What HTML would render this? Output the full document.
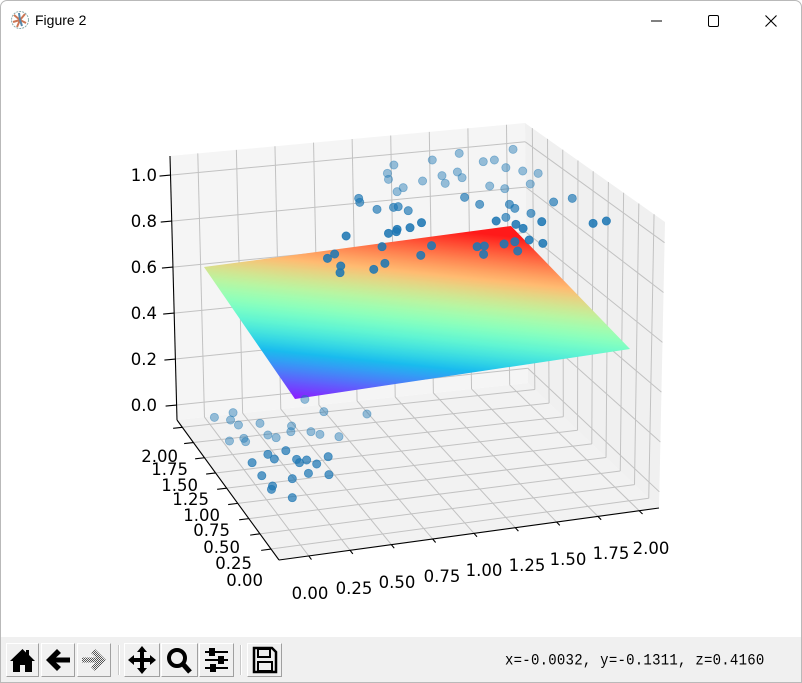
<!DOCTYPE html>
<html><head><meta charset="utf-8">
<style>
html,body{margin:0;padding:0;}
body{width:802px;height:683px;overflow:hidden;background:#fff;font-family:"Liberation Sans",sans-serif;position:relative;}
#win{position:absolute;left:0;top:0;width:800px;height:681px;border:1px solid #b9b9b9;border-radius:7px 7px 0 0;overflow:hidden;background:#fff;}
#title{position:absolute;left:34px;top:11px;font-size:14px;color:#000;font-family:"Liberation Sans","DejaVu Sans",sans-serif;}
#tb{position:absolute;left:0;top:636px;width:800px;height:45px;background:#f0f0f0;}
.btn{position:absolute;top:6px;height:34px;background:#f0f0f0;border:1px solid;border-color:#fff #a0a0a0 #a0a0a0 #fff;box-sizing:border-box;}
.sep{position:absolute;top:8px;width:1px;height:30px;background:#c8c8c8;border-right:1px solid #fff;}
#status{position:absolute;left:504px;top:16px;font-family:"Liberation Mono",monospace;font-size:14px;letter-spacing:0.25px;color:#000;transform:scaleY(1.1);}
svg text{font-family:"DejaVu Sans",sans-serif;}
</style></head><body>
<div id="win">
<svg style="position:absolute;left:9px;top:9px" width="20" height="20" viewBox="0 0 20 20">
<circle cx="10" cy="10" r="8.5" fill="#fff" stroke="#8aa" stroke-width="1" stroke-dasharray="2 1"/>
<path d="M10 10 L4 5 M10 10 L15 4 M10 10 L16 13 M10 10 L7 17 M10 10 L3 12" stroke="#c75" stroke-width="2"/>
<path d="M10 10 L12 16 M10 10 L9 3" stroke="#58a" stroke-width="2"/>
</svg>
<div id="title">Figure 2</div>
<svg style="position:absolute;left:640px;top:8px" width="150" height="24">
<line x1="10" y1="12" x2="21" y2="12" stroke="#000" stroke-width="1"/>
<rect x="67.5" y="6.5" width="10" height="11" rx="1.5" fill="none" stroke="#000" stroke-width="1"/>
<path d="M124.5 6.5 L135.5 17.5 M135.5 6.5 L124.5 17.5" stroke="#000" stroke-width="1.1"/>
</svg>
<svg id="plot" style="position:absolute;left:-1px;top:-1px" width="802" height="683"></svg>
<div id="tb">
 <div class="btn" style="left:5px;width:33px"><svg width="31" height="32" viewBox="0 0 31 32"><path d="M15.5 5 L3 17 L6 17 L6 28 L13 28 L13 21 L18 21 L18 28 L25 28 L25 17 L28 17 L22 11 L22 6 L19 6 L19 8.5 Z" fill="#000"/></svg></div>
 <div class="btn" style="left:40px;width:34px"><svg width="32" height="32" viewBox="0 0 32 32"><path d="M4 16 L15 5 L19 9 L14 13.5 L28 13.5 L28 18.5 L14 18.5 L19 23 L15 27 Z" fill="#000"/></svg></div>
 <div class="btn" style="left:76px;width:34px"><svg width="32" height="32" viewBox="0 0 32 32"><defs><pattern id="dt" width="2" height="2" patternUnits="userSpaceOnUse"><rect width="1" height="1" fill="#555"/><rect x="1" y="1" width="1" height="1" fill="#555"/></pattern></defs><path d="M28 16 L17 5 L13 9 L18 13.5 L4 13.5 L4 18.5 L18 18.5 L13 23 L17 27 Z" fill="url(#dt)"/></svg></div>
 <div class="sep" style="left:117px"></div>
 <div class="btn" style="left:123px;width:36px"><svg width="34" height="32" viewBox="0 0 34 32"><path d="M17 2 L22 8 L19 8 L19 14 L25 14 L25 11 L31 16 L25 21 L25 18 L19 18 L19 24 L22 24 L17 30 L12 24 L15 24 L15 18 L9 18 L9 21 L3 16 L9 11 L9 14 L15 14 L15 8 L12 8 Z" fill="#000"/></svg></div>
 <div class="btn" style="left:160px;width:37px"><svg width="35" height="32" viewBox="0 0 35 32"><circle cx="15" cy="14" r="8" fill="none" stroke="#000" stroke-width="4"/><path d="M20 19 L28 28" stroke="#000" stroke-width="5"/></svg></div>
 <div class="btn" style="left:198px;width:35px"><svg width="33" height="32" viewBox="0 0 33 32"><g stroke="#000" stroke-width="2"><line x1="5" y1="8" x2="28" y2="8"/><line x1="5" y1="16" x2="28" y2="16"/><line x1="5" y1="24" x2="28" y2="24"/></g><rect x="9" y="4" width="6" height="8" fill="#000"/><rect x="18" y="12" width="6" height="8" fill="#000"/><rect x="10" y="20" width="6" height="8" fill="#000"/></svg></div>
 <div class="sep" style="left:239px"></div>
 <div class="btn" style="left:246px;width:35px"><svg width="33" height="32" viewBox="0 0 33 32"><path d="M6 4 L24 4 L28 8 L28 28 L6 28 Z" fill="none" stroke="#000" stroke-width="2.5"/><rect x="10" y="5" width="12" height="8" fill="none" stroke="#000" stroke-width="2"/><rect x="10" y="18" width="14" height="9" fill="none" stroke="#000" stroke-width="2"/></svg></div>
 <div id="status">x=-0.0032, y=-0.1311, z=0.4160</div>
</div>
</div>
<script>
(function(){
var NS="http://www.w3.org/2000/svg",svg=document.getElementById('plot');
function el(t,a,p){var e=document.createElementNS(NS,t);for(var k in a)e.setAttribute(k,a[k]);(p||svg).appendChild(e);return e;}
var xmin=-0.18,xmax=2.12,ymin=-0.18,ymax=2.12,zmin=-0.065,zmax=1.083;
var C={ '000':[279,560],'100':[659,508],'010':[177,420],'110':[528,383],
        '001':[275,265],'101':[665,222],'011':[170,156],'111':[525,123]};
function lerp(a,b,t){return [a[0]+(b[0]-a[0])*t,a[1]+(b[1]-a[1])*t];}
function P(x,y,z){var u=(x-xmin)/(xmax-xmin),v=(y-ymin)/(ymax-ymin),w=(z-zmin)/(zmax-zmin);
 var a=lerp(C['000'],C['100'],u),b=lerp(C['010'],C['110'],u),c=lerp(C['001'],C['101'],u),d=lerp(C['011'],C['111'],u);
 return lerp(lerp(a,b,v),lerp(c,d,v),w);}
function poly(pts,a){a.points=pts.map(function(p){return p[0]+','+p[1]}).join(' ');return el('polygon',a);}
function line(p,q,a){a.x1=p[0];a.y1=p[1];a.x2=q[0];a.y2=q[1];return el('line',a);}
poly([P(xmin,ymin,zmin),P(xmax,ymin,zmin),P(xmax,ymax,zmin),P(xmin,ymax,zmin)],{fill:'#f2f2f2'});
poly([P(xmin,ymax,zmin),P(xmax,ymax,zmin),P(xmax,ymax,zmax),P(xmin,ymax,zmax)],{fill:'#f5f5f5'});
poly([P(xmax,ymin,zmin),P(xmax,ymax,zmin),P(xmax,ymax,zmax),P(xmax,ymin,zmax)],{fill:'#f0f0f0'});
var g={stroke:'#c2c2c2','stroke-width':1};
var ticks=[0,0.25,0.5,0.75,1,1.25,1.5,1.75,2],zt=[0,0.2,0.4,0.6,0.8,1.0];
ticks.forEach(function(t){
 line(P(t,ymin,zmin),P(t,ymax,zmin),g);line(P(xmin,t,zmin),P(xmax,t,zmin),g);
 line(P(t,ymax,zmin),P(t,ymax,zmax),g);line(P(xmax,t,zmin),P(xmax,t,zmax),g);});
zt.forEach(function(t){line(P(xmin,ymax,t),P(xmax,ymax,t),g);line(P(xmax,ymin,t),P(xmax,ymax,t),g);});
var ax={stroke:'#000','stroke-width':1.1};
line(P(xmin,ymin,zmin),P(xmax,ymin,zmin),ax);
line(P(xmin,ymin,zmin),P(xmin,ymax,zmin),ax);
line(P(xmin,ymax,zmin),P(xmin,ymax,zmax),ax);
ticks.forEach(function(t){line(P(t,ymin,zmin),P(t,ymin-0.06,zmin),ax);line(P(xmin,t,zmin),P(xmin-0.06,t,zmin),ax);});
zt.forEach(function(t){var p=P(xmin,ymax,t);line(p,[p[0]-11,p[1]+1],ax);});
var fs={'font-size':'16.5px',fill:'#000'};
var zl=['0.0','0.2','0.4','0.6','0.8','1.0'],zy=[405,359,313,267,221,175];
zl.forEach(function(s,i){var t=el('text',Object.assign({x:157,y:zy[i]+6,'text-anchor':'end'},fs));t.textContent=s;});
var yl=['2.00','1.75','1.50','1.25','1.00','0.75','0.50','0.25','0.00'],
    yx=[178,188,198,209,220,230,240,252,263],yy=[456,469,485,499,515,530,547,563,580];
yl.forEach(function(s,i){var t=el('text',Object.assign({x:yx[i],y:yy[i]+6,'text-anchor':'end'},fs));t.textContent=s;});
var xl=['0.00','0.25','0.50','0.75','1.00','1.25','1.50','1.75','2.00'],
    xx=[310,354,397,442,484,527,568,611,651],xy=[593,588,582,576,570,565,559,553,548];
xl.forEach(function(s,i){var t=el('text',Object.assign({x:xx[i],y:xy[i]+6,'text-anchor':'middle'},fs));t.textContent=s;});
var defs=el('defs',{});
var lg=el('linearGradient',{id:'rb',gradientUnits:'userSpaceOnUse',x1:295,y1:399,x2:314,y2:216},defs);
for(var i=0;i<=20;i++){var x=i/20;var r=Math.min(1,Math.abs(2*x-0.5)),gg=Math.sin(Math.PI*x),b=Math.cos(Math.PI*x/2);
 el('stop',{offset:x,'stop-color':'rgb('+Math.round(r*255)+','+Math.round(gg*255)+','+Math.round(b*255)+')'},lg);}
var S00=[295,399],S02=[204,267],S22=[511,226],S20=[630,349];
poly([S00,S02,S22,S20],{fill:'url(#rb)'});
poly([S00,S02,S22,S20],{fill:'#fff','fill-opacity':0.1});
var mg=el('g',{stroke:'#fff','stroke-opacity':0.25,'stroke-width':0.6});
for(var k=1;k<50;k++){var t=k/50;line(lerp(S00,S20,t),lerp(S02,S22,t),{},mg);line(lerp(S00,S02,t),lerp(S20,S22,t),{},mg);}
var top=[[870,150],[945,130],[1095,118],[1012,155],[1043,150],[1075,173],[763,165],[745,190],[748,208],[897,197],[940,186],[953,203],[906,220],[843,213],[1122,183],[1165,190],[1143,222],[1030,228],[1072,236],[789,233],[772,245],[665,265],[668,277],[960,262],[1002,283],[1085,283],[1100,295],[1208,276],[1260,265],[716,298],[762,292],[775,290],[803,302],[1145,310],[1175,335],[1048,333],[1075,322],[1318,340],[1355,333],[840,338],[808,353],[748,370],[770,365],[772,358],[630,378],[1103,343],[1123,355],[1140,390],[1178,400],[1100,395],[1070,402],[730,410],[868,407],[838,436],[995,410],[1015,408],[1013,433],[1108,423],[578,445],[598,432],[615,468],[613,488],[707,478],[738,460]];
var bot=[[263,922],[315,908],[308,930],[330,945],[390,940],[515,868],[568,905],[688,912],[478,948],[476,965],[532,965],[557,973],[412,975],[435,983],[305,993],[345,985],[350,995],[610,980],[462,1022],[412,1033],[430,1047],[580,1040],[368,1058],[492,1048],[500,1058],[520,1050],[548,1062],[525,1090],[582,1094],[395,1097],[480,1106],[425,1128],[422,1138],[480,1163]];
function dot(p,a){el('circle',{cx:p[0]/2.786+120,cy:p[1]/3+110,r:4.1,fill:'#1f77b4','fill-opacity':a,stroke:'#1f77b4','stroke-opacity':a,'stroke-width':0.8});}
bot.forEach(function(p){dot(p,p[1]<1000?0.45:0.72);});
top.forEach(function(p){dot(p,p[1]<250?0.45:(p[1]<330?0.68:0.88));});
})();
</script>
</body></html>
